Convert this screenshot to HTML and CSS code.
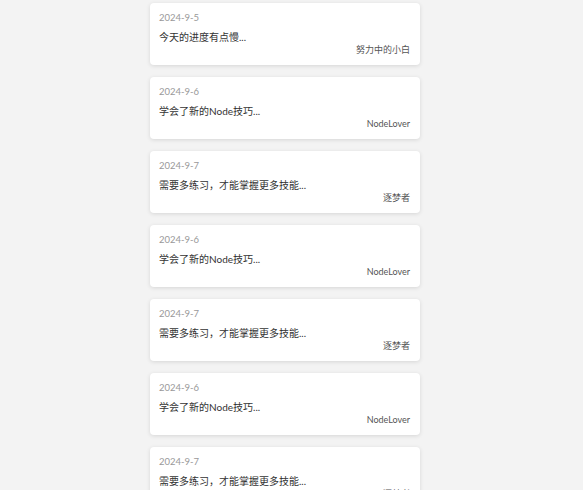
FILE: index.html
```html
<!DOCTYPE html>
<html lang="zh-CN">
<head>
    <meta charset="UTF-8">
    <meta name="viewport" content="width=device-width, initial-scale=1.0">
    <title>日记列表</title>
    <link rel="stylesheet" href="styles.css">
</head>
<body>
    <div class="list">
        <div class="card">
            <div class="date">2024-9-5</div>
            <div class="content">今天的进度有点慢...</div>
            <div class="author">努力中的小白</div>
        </div>
        <div class="card">
            <div class="date">2024-9-6</div>
            <div class="content">学会了新的Node技巧...</div>
            <div class="author">NodeLover</div>
        </div>
        <div class="card">
            <div class="date">2024-9-7</div>
            <div class="content">需要多练习，才能掌握更多技能...</div>
            <div class="author">逐梦者</div>
        </div>
        <div class="card">
            <div class="date">2024-9-6</div>
            <div class="content">学会了新的Node技巧...</div>
            <div class="author">NodeLover</div>
        </div>
        <div class="card">
            <div class="date">2024-9-7</div>
            <div class="content">需要多练习，才能掌握更多技能...</div>
            <div class="author">逐梦者</div>
        </div>
        <div class="card">
            <div class="date">2024-9-6</div>
            <div class="content">学会了新的Node技巧...</div>
            <div class="author">NodeLover</div>
        </div>
        <div class="card">
            <div class="date">2024-9-7</div>
            <div class="content">需要多练习，才能掌握更多技能...</div>
            <div class="author">逐梦者</div>
        </div>
    </div>
</body>
</html>
```

FILE: styles.css
```css
body {
    font-family: Lato, "Noto Sans CJK SC", sans-serif;
    background-color: #f3f3f3;
    margin: 0;
    padding: 0 13px 0 0;
    overflow: hidden;
}
.list {
    width: 270px;
    margin: 3px auto 0;
    display: flex;
    flex-direction: column;
    gap: 12px;
}
.card {
    background-color: #fff;
    border-radius: 4px;
    box-shadow: 0 1px 4px rgba(0, 0, 0, 0.12);
    padding: 8px 10px 0 9px;
    height: 62px;
    box-sizing: border-box;
}
.date {
    font-size: 9.5px;
    line-height: 14px;
    color: #999;
}
.content {
    margin-top: 5px;
    font-size: 10px;
    line-height: 14px;
    color: #333;
}
.author {
    font-size: 9px;
    line-height: 11px;
    color: #555;
    text-align: right;
}
```
